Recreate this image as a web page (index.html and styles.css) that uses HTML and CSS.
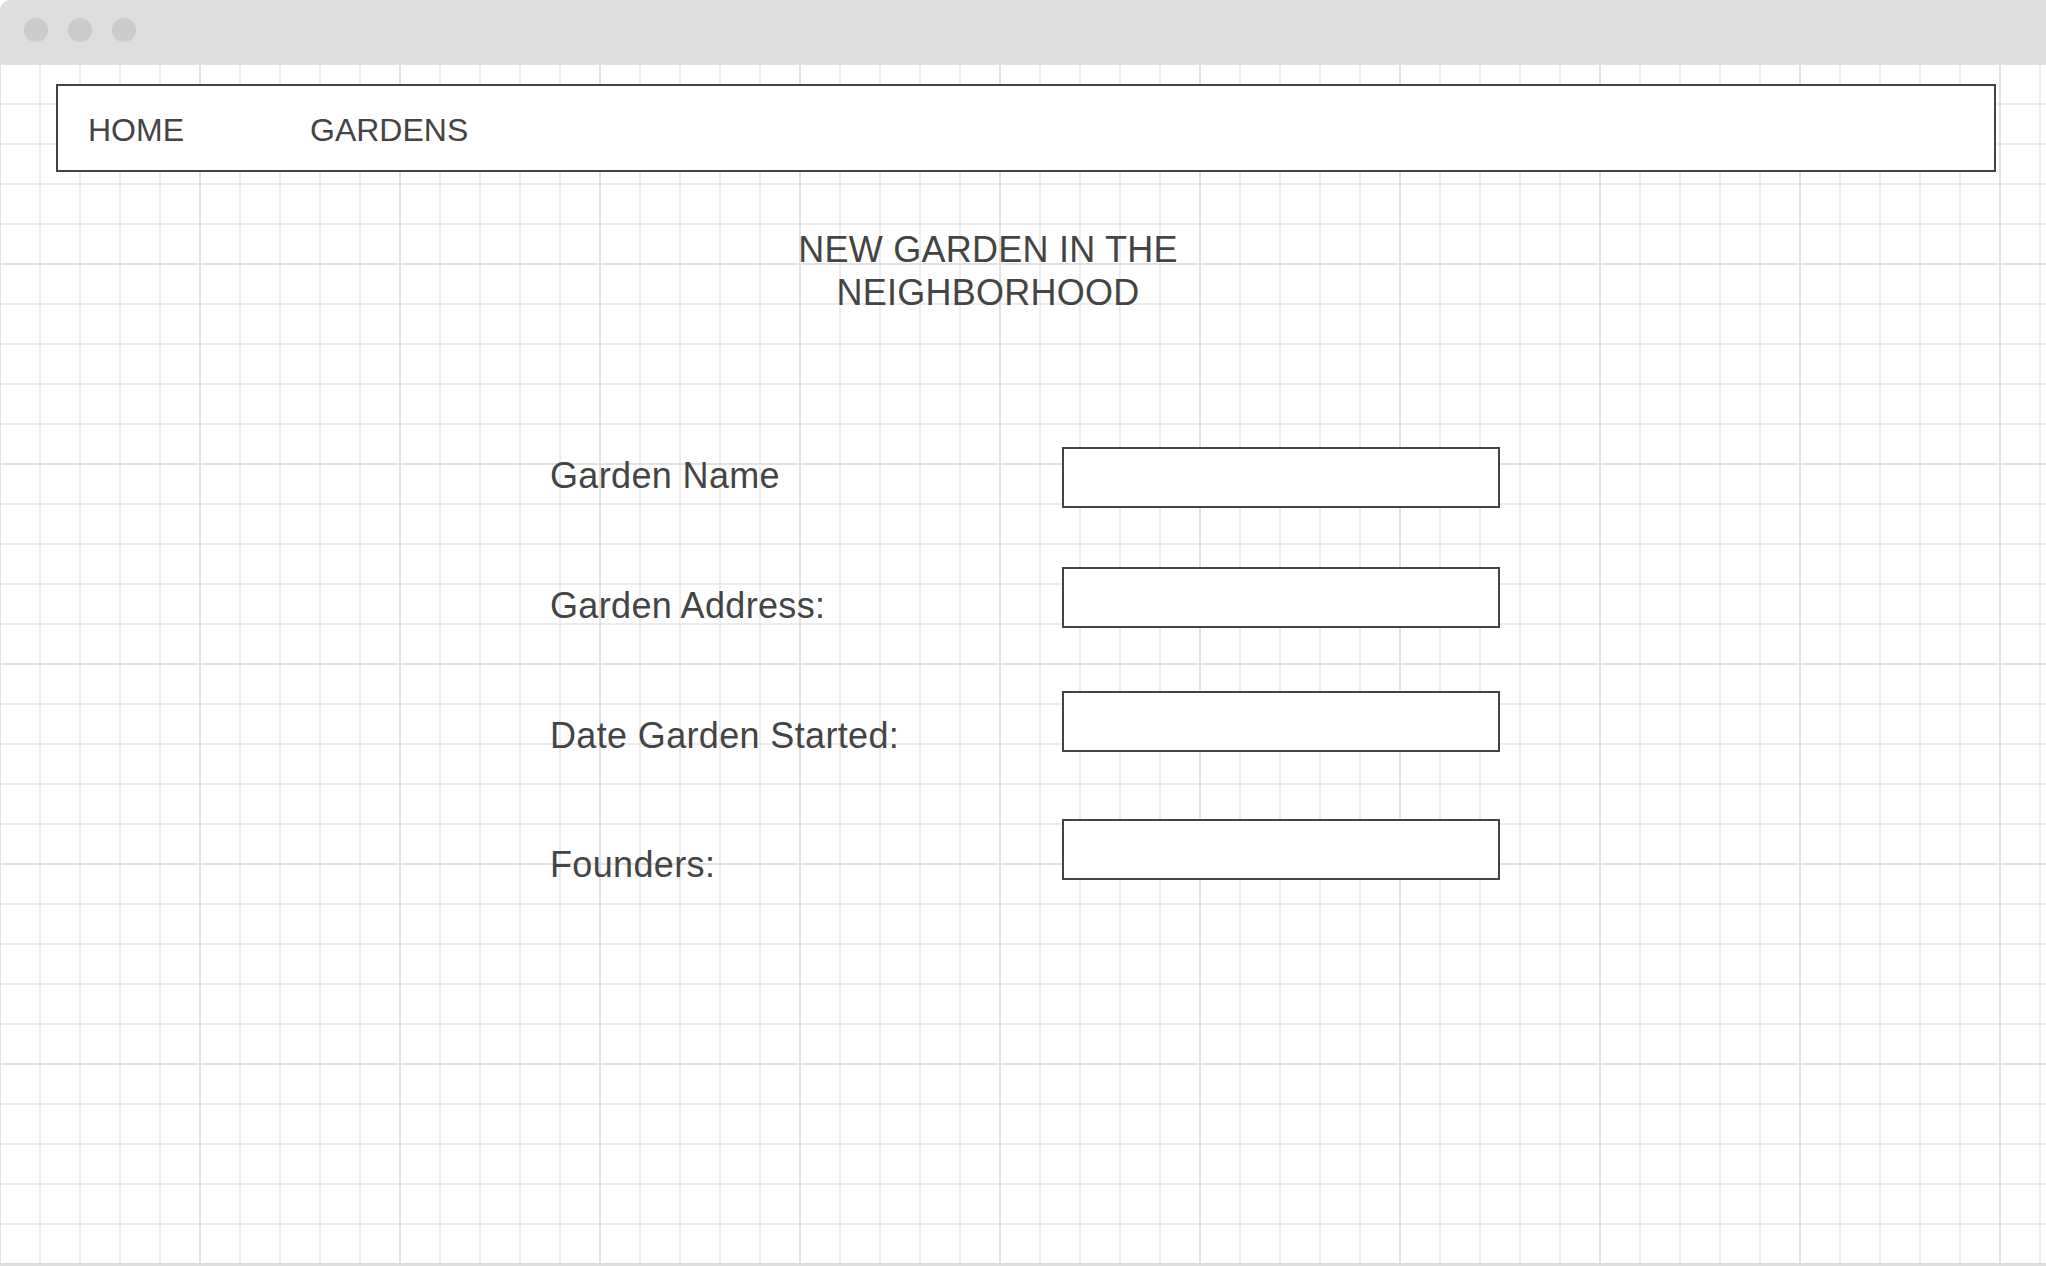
FILE: index.html
```html
<!DOCTYPE html>
<html lang="en">
<head>
<meta charset="utf-8">
<title>New Garden</title>
<link rel="stylesheet" href="styles.css">
</head>
<body>
<div class="window">
  <div class="titlebar">
    <span class="dot"></span>
    <span class="dot"></span>
    <span class="dot"></span>
  </div>
  <div class="canvas">
    <nav class="nav">
      <a class="nav-link" href="#">HOME</a>
      <a class="nav-link" href="#">GARDENS</a>
    </nav>
    <h1 class="title">NEW GARDEN IN THE<br>NEIGHBORHOOD</h1>
    <form class="form">
      <div class="labels">
        <label class="label" for="name">Garden Name</label>
        <label class="label" for="address">Garden Address:</label>
        <label class="label" for="date">Date Garden Started:</label>
        <label class="label" for="founders">Founders:</label>
      </div>
      <div class="fields">
        <input class="field" id="name" type="text">
        <input class="field" id="address" type="text">
        <input class="field" id="date" type="text">
        <input class="field" id="founders" type="text">
      </div>
    </form>
  </div>
</div>
</body>
</html>
```
FILE: styles.css
```css
* { box-sizing: border-box; }

html, body {
  margin: 0;
  padding: 0;
  background: #ffffff;
}

body {
  font-family: "Liberation Sans", Arial, sans-serif;
  color: #444444;
}

.window {
  width: 2046px;
  height: 1266px;
  display: flex;
  flex-direction: column;
  overflow: hidden;
}

.titlebar {
  height: 64px;
  flex: 0 0 64px;
  background: #dddddd;
  border-top-left-radius: 10px;
  display: flex;
  align-items: flex-start;
  gap: 20px;
  padding: 18px 0 0 24px;
}

.dot {
  width: 24px;
  height: 24px;
  border-radius: 50%;
  background: #cbcbcb;
}

.canvas {
  flex: 1;
  display: flex;
  flex-direction: column;
  border-bottom: 3px solid #dddddd;
  background-color: #ffffff;
  background-image:
    linear-gradient(to right, #e1e1e1 1px, transparent 1px, transparent 199px, #e1e1e1 199px),
    linear-gradient(to bottom, #e1e1e1 1px, transparent 1px, transparent 199px, #e1e1e1 199px),
    linear-gradient(to right, #ececec 1px, transparent 1px, transparent 39px, #ececec 39px),
    linear-gradient(to bottom, #ececec 1px, transparent 1px, transparent 39px, #ececec 39px);
  background-size: 200px 200px, 200px 200px, 40px 40px, 40px 40px;
  background-position: 0 0;
}

.nav {
  margin: 20px 50px 0 56px;
  height: 88px;
  border: 2px solid #444444;
  background: #ffffff;
  display: flex;
  align-items: flex-start;
  gap: 126px;
  padding: 26px 30px 0 30px;
}

.nav-link {
  font-size: 32px;
  line-height: normal;
  color: #444444;
  text-decoration: none;
}

.title {
  margin: 56px 0 0 0;
  padding-right: 70px;
  text-align: center;
  font-size: 36px;
  font-weight: normal;
  line-height: 43px;
  letter-spacing: 0.25px;
  color: #444444;
}

.form {
  display: flex;
  margin-top: 132px;
  padding-left: 550px;
}

.labels {
  width: 512px;
  display: flex;
  flex-direction: column;
  padding-top: 8px;
}

.label {
  font-size: 36px;
  line-height: 44px;
  letter-spacing: 0.35px;
  color: #444444;
  margin-bottom: 86px;
}

.label:nth-child(3) {
  margin-bottom: 85px;
}

.fields {
  display: flex;
  flex-direction: column;
  padding-top: 1px;
}

.field {
  display: block;
  width: 438px;
  height: 61px;
  border: 2px solid #444444;
  border-radius: 0;
  background: #ffffff;
  padding: 0;
  margin: 0;
  outline: none;
}

.field:nth-child(2) { margin-top: 59px; }
.field:nth-child(3) { margin-top: 63px; }
.field:nth-child(4) { margin-top: 67px; }
```
